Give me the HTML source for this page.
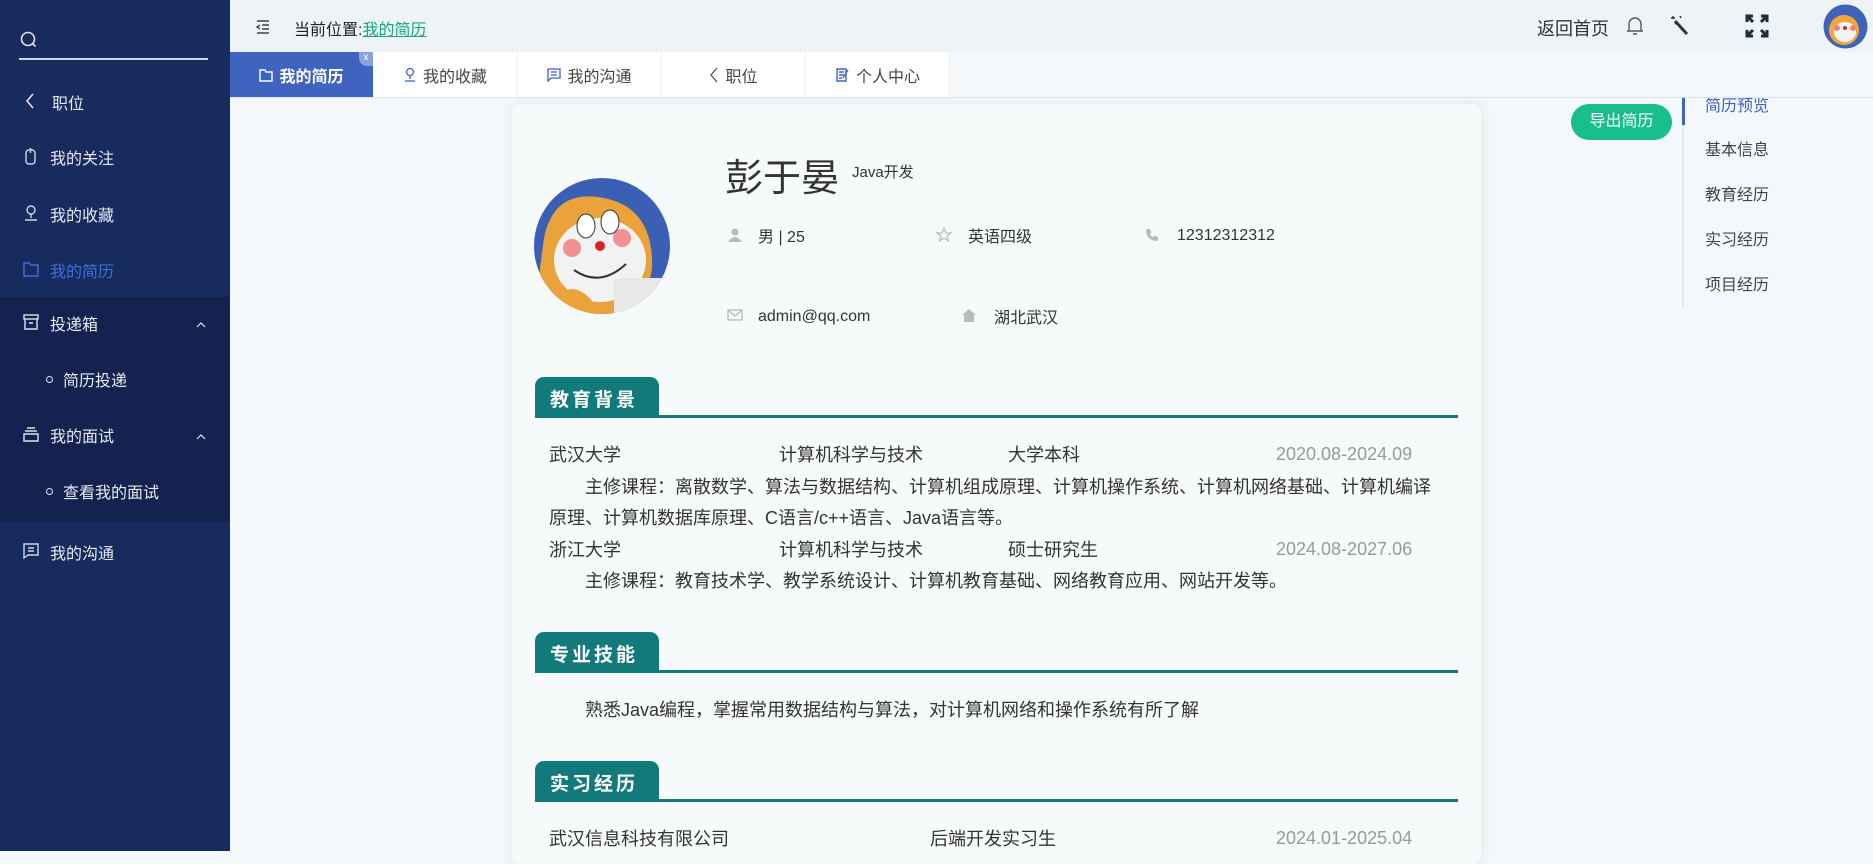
<!DOCTYPE html>
<html><head><meta charset="utf-8"><style>
*{margin:0;padding:0;box-sizing:border-box}
body{width:1873px;height:851px;overflow:hidden;background:#f4f8fa;font-family:"Liberation Sans","Noto Sans CJK SC",sans-serif;position:relative;color:#333}
.a{position:absolute;white-space:nowrap}
.sb{left:0;top:0;width:230px;height:851px;background:#182b5f}
.sub{left:0;top:297px;width:230px;height:225px;background:#13224f}
.mi{color:#e6e9f0;font-size:16px;left:50px}
.ic{left:22px;width:18px;height:18px}
.hd{left:230px;top:0;width:1643px;height:52px;background:#edf3f7}
.tab{top:52px;height:46px;background:#fff;border-right:1px solid #eceff3;font-size:16px;color:#444;display:flex;align-items:center;justify-content:center;gap:6px}
.card{left:512px;top:104px;width:969px;height:760px;background:#f7fafb;border-radius:9px;box-shadow:0 0 12px rgba(0,0,0,.09)}
.sec{left:535px;width:124px;height:39px;background:#127a7a;border-radius:9px 9px 0 0;color:#fff;font-weight:bold;font-size:19px;letter-spacing:3px;padding:8px 0 0 15px}
.ln{left:535px;width:923px;height:3px;background:#127a7a}
.t{font-size:18px;color:#333}
.d{font-size:18px;color:#999}
.nv{left:1705px;font-size:16px;color:#444}
.inf{font-size:16px;color:#333}
</style></head><body>
<div class="a sb"></div><div class="a sub"></div>
<svg class="a" style="left:19px;top:30px" width="20" height="20" viewBox="0 0 20 20"><circle cx="9" cy="9" r="6.5" fill="none" stroke="#dfe3ec" stroke-width="1.6"/><path d="M13.5 13.5l3 3" stroke="#dfe3ec" stroke-width="1.6"/></svg>
<div class="a" style="left:19px;top:58px;width:189px;height:2px;background:#cfd5e2"></div>
<svg class="a" style="left:24px;top:92px" width="12" height="18"><path d="M9 2L3 9l6 7" fill="none" stroke="#e6e9f0" stroke-width="1.5"/></svg>
<div class="a mi" style="top:90px;left:52px">职位</div>
<svg class="a ic" style="top:147px" viewBox="0 0 18 18"><rect x="4" y="3" width="9" height="14" rx="3" fill="none" stroke="#cfd5e2" stroke-width="1.4"/><path d="M8.5 1v5" stroke="#cfd5e2" stroke-width="1.4"/></svg>
<div class="a mi" style="top:145px">我的关注</div>
<svg class="a ic" style="top:204px" viewBox="0 0 18 18"><circle cx="9" cy="6" r="4" fill="none" stroke="#cfd5e2" stroke-width="1.4"/><path d="M9 10v4M3 16h12" stroke="#cfd5e2" stroke-width="1.4"/></svg>
<div class="a mi" style="top:202px">我的收藏</div>
<svg class="a ic" style="top:260px" viewBox="0 0 18 18"><path d="M2 3h5l2 2h7v11H2z" fill="none" stroke="#3d6fd6" stroke-width="1.4"/></svg>
<div class="a mi" style="top:258px;color:#3d6fd6">我的简历</div>
<svg class="a ic" style="top:313px" viewBox="0 0 18 18"><rect x="2" y="2" width="14" height="4" fill="none" stroke="#dfe3ec" stroke-width="1.4"/><path d="M3 6v10h12V6M7 10h4" fill="none" stroke="#dfe3ec" stroke-width="1.4"/></svg>
<div class="a mi" style="top:311px">投递箱</div>
<svg class="a" style="left:196px;top:321px" width="10" height="8"><path d="M1 6l4-4 4 4" fill="none" stroke="#dfe3ec" stroke-width="1.2"/></svg>
<div class="a" style="left:46px;top:376px;width:7px;height:7px;border:1.3px solid #dfe3ec;border-radius:50%"></div>
<div class="a mi" style="top:367px;left:63px">简历投递</div>
<svg class="a ic" style="top:425px" viewBox="0 0 18 18"><path d="M5 3h8M3 6h12M2 9h14v7H2z" fill="none" stroke="#dfe3ec" stroke-width="1.4"/></svg>
<div class="a mi" style="top:423px">我的面试</div>
<svg class="a" style="left:196px;top:433px" width="10" height="8"><path d="M1 6l4-4 4 4" fill="none" stroke="#dfe3ec" stroke-width="1.2"/></svg>
<div class="a" style="left:46px;top:488px;width:7px;height:7px;border:1.3px solid #dfe3ec;border-radius:50%"></div>
<div class="a mi" style="top:479px;left:63px">查看我的面试</div>
<svg class="a ic" style="top:542px" viewBox="0 0 18 18"><path d="M2 2h14v11H6l-4 3z" fill="none" stroke="#cfd5e2" stroke-width="1.4"/><path d="M6 6h6M6 9h6" stroke="#cfd5e2" stroke-width="1.4"/></svg>
<div class="a mi" style="top:540px">我的沟通</div>

<div class="a hd"></div>
<svg class="a" style="left:255px;top:19px" width="16" height="16"><path d="M2 2h12M7 6h7M7 10h7M2 14h12M5 6l-3 2 3 2" fill="none" stroke="#444" stroke-width="1.4"/></svg>
<div class="a" style="left:294px;top:16px;font-size:16px;color:#222">当前位置:<span style="color:#19a67d;text-decoration:underline">我的简历</span></div>
<div class="a" style="left:1537px;top:15px;font-size:18px;color:#333">返回首页</div>
<svg class="a" style="left:1625px;top:15px" width="20" height="22"><path d="M4 16V9a6 6 0 0 1 12 0v7zM2 16h16M8 19h4" fill="none" stroke="#555" stroke-width="1.4"/></svg>
<svg class="a" style="left:1668px;top:13px" width="22" height="24"><path d="M7 8l12 13" stroke="#333" stroke-width="3"/><path d="M5 3v3M3 5h4M12 3l1 2M9 10l-2 1" stroke="#333" stroke-width="1.4"/></svg>
<svg class="a" style="left:1745px;top:14px" width="24" height="24"><path d="M2 8V2h6M16 2h6v6M22 16v6h-6M8 22H2v-6M2 2l6 6M22 2l-6 6M22 22l-6-6M2 22l6-6" fill="none" stroke="#1d2b3a" stroke-width="3"/></svg>
<svg class="a" style="left:1823px;top:4px" width="45" height="45" viewBox="0 0 45 45"><circle cx="22.5" cy="22.5" r="22" fill="#3f63b8"/><circle cx="21" cy="26" r="15" fill="#f0a83c"/><ellipse cx="22" cy="28" rx="11" ry="10" fill="#f3f3f3"/><circle cx="14" cy="24" r="3" fill="#f08080"/><circle cx="30" cy="24" r="3" fill="#f08080"/><circle cx="22" cy="24" r="2" fill="#d22"/></svg>

<div class="a tab" style="left:230px;width:143px;background:#3e64bf;color:#fff;font-weight:bold;border:none"><svg width="14" height="14"><path d="M1 2h5l1 2h6v9H1z" fill="none" stroke="#fff" stroke-width="1.4"/></svg>我的简历</div>
<div class="a" style="left:359px;top:52px;width:14px;height:14px;border-radius:0 0 0 8px;background:#8da3d8;color:#fff;font-size:10px;text-align:center;line-height:11px">x</div>
<div class="a tab" style="left:373px;width:145px"><svg width="14" height="16"><circle cx="7" cy="5" r="3.5" fill="none" stroke="#3e64bf" stroke-width="1.3"/><path d="M7 9v3M2 14h10" stroke="#3e64bf" stroke-width="1.3"/></svg>我的收藏</div>
<div class="a tab" style="left:518px;width:144px"><svg width="14" height="14"><path d="M1 1h12v9H4l-3 3z M4 4h6M4 7h6" fill="none" stroke="#3e64bf" stroke-width="1.3"/></svg>我的沟通</div>
<div class="a tab" style="left:662px;width:144px"><svg width="10" height="16"><path d="M8 1L2 8l6 7" fill="none" stroke="#555" stroke-width="1.3"/></svg>职位</div>
<div class="a tab" style="left:806px;width:144px"><svg width="15" height="16"><path d="M2 2h9v12H2zM4 5h5M4 8h5M4 11h3M13 3l-5 8" fill="none" stroke="#3e64bf" stroke-width="1.4"/></svg>个人中心</div>
<div class="a" style="left:230px;top:97px;width:1643px;height:1px;background:#dde4ea"></div>

<div class="a card"></div>
<svg class="a" style="left:534px;top:178px" width="136" height="136" viewBox="0 0 136 136"><defs><clipPath id="c"><circle cx="68" cy="68" r="68"/></clipPath></defs><g clip-path="url(#c)"><rect width="136" height="136" fill="#3a5fb5"/><path d="M10 60 Q20 10 70 20 Q120 30 118 90 L110 136 L0 136z" fill="#eaa23a"/><ellipse cx="66" cy="82" rx="46" ry="42" fill="#f2f2f2"/><circle cx="38" cy="70" r="9" fill="#f07878" opacity=".8"/><circle cx="88" cy="60" r="9" fill="#f07878" opacity=".8"/><circle cx="66" cy="68" r="5" fill="#d22"/><ellipse cx="52" cy="48" rx="9" ry="12" fill="#fff" stroke="#333"/><ellipse cx="76" cy="44" rx="9" ry="12" fill="#fff" stroke="#333"/><path d="M40 92 Q66 110 92 86" fill="none" stroke="#333" stroke-width="2"/><rect x="80" y="100" width="50" height="40" fill="#e8e8e8"/><path d="M20 120 Q40 100 60 125 L60 136 L10 136z" fill="#eaa23a"/></g></svg>
<div class="a" style="left:725px;top:147px;font-size:38px;color:#333">彭于晏</div>
<div class="a" style="left:852px;top:161px;font-size:15px;color:#333">Java开发</div>
<svg class="a" style="left:728px;top:228px" width="14" height="14"><circle cx="7" cy="4" r="3.5" fill="#bbb"/><path d="M0 14q7-10 14 0z" fill="#bbb"/></svg>
<div class="a inf" style="left:758px;top:223px">男 | 25</div>
<svg class="a" style="left:936px;top:227px" width="16" height="16"><path d="M8 1l2 5h5l-4 3 1.5 5L8 11l-4.5 3L5 9 1 6h5z" fill="none" stroke="#bbb" stroke-width="1.2"/></svg>
<div class="a inf" style="left:968px;top:223px">英语四级</div>
<svg class="a" style="left:1145px;top:228px" width="14" height="14" viewBox="0 0 14 14"><path d="M3 1h2l1.5 3.5-1.8 1.3q1.3 2.6 3.5 3.5l1.3-1.8L13 9v2q0 2-2 2Q2 12 1 3q0-2 2-2z" fill="#bbb"/></svg>
<div class="a inf" style="left:1177px;top:227px">12312312312</div>
<svg class="a" style="left:727px;top:309px" width="16" height="12"><rect x="1" y="1" width="14" height="10" fill="none" stroke="#bbb" stroke-width="1.3"/><path d="M1 1l7 6 7-6" fill="none" stroke="#bbb" stroke-width="1.3"/></svg>
<div class="a inf" style="left:758px;top:308px">admin@qq.com</div>
<svg class="a" style="left:961px;top:308px" width="16" height="14"><path d="M8 1l7 6h-2v7H3V7H1z" fill="#bbb"/></svg>
<div class="a inf" style="left:994px;top:304px">湖北武汉</div>

<div class="a sec" style="top:377px">教育背景</div><div class="a ln" style="top:415px"></div>
<div class="a t" style="left:549px;top:441px">武汉大学</div><div class="a t" style="left:779px;top:441px">计算机科学与技术</div><div class="a t" style="left:1008px;top:441px">大学本科</div><div class="a d" style="left:1276px;top:444px">2020.08-2024.09</div>
<div class="a t" style="left:585px;top:473px">主修课程：离散数学、算法与数据结构、计算机组成原理、计算机操作系统、计算机网络基础、计算机编译</div>
<div class="a t" style="left:549px;top:504px">原理、计算机数据库原理、C语言/c++语言、Java语言等。</div>
<div class="a t" style="left:549px;top:536px">浙江大学</div><div class="a t" style="left:779px;top:536px">计算机科学与技术</div><div class="a t" style="left:1008px;top:536px">硕士研究生</div><div class="a d" style="left:1276px;top:539px">2024.08-2027.06</div>
<div class="a t" style="left:585px;top:567px">主修课程：教育技术学、教学系统设计、计算机教育基础、网络教育应用、网站开发等。</div>

<div class="a sec" style="top:632px">专业技能</div><div class="a ln" style="top:670px"></div>
<div class="a t" style="left:585px;top:696px">熟悉Java编程，掌握常用数据结构与算法，对计算机网络和操作系统有所了解</div>

<div class="a sec" style="top:761px">实习经历</div><div class="a ln" style="top:799px"></div>
<div class="a t" style="left:549px;top:825px">武汉信息科技有限公司</div><div class="a t" style="left:930px;top:825px">后端开发实习生</div><div class="a d" style="left:1276px;top:828px">2024.01-2025.04</div>

<div class="a" style="left:1571px;top:104px;width:101px;height:36px;border-radius:18px;background:#19bf8b;color:#fff;font-size:16px;text-align:center;line-height:36px">导出简历</div>
<div class="a" style="left:1682px;top:98px;width:2px;height:209px;background:#e3e7ec"></div>
<div class="a" style="left:1682px;top:98px;width:3px;height:27px;background:#3e64bf"></div>
<div class="a nv" style="top:92px;color:#3e64bf;clip-path:inset(6px 0 0 0)">简历预览</div>
<div class="a nv" style="top:136px">基本信息</div>
<div class="a nv" style="top:181px">教育经历</div>
<div class="a nv" style="top:226px">实习经历</div>
<div class="a nv" style="top:271px">项目经历</div>
</body></html>
